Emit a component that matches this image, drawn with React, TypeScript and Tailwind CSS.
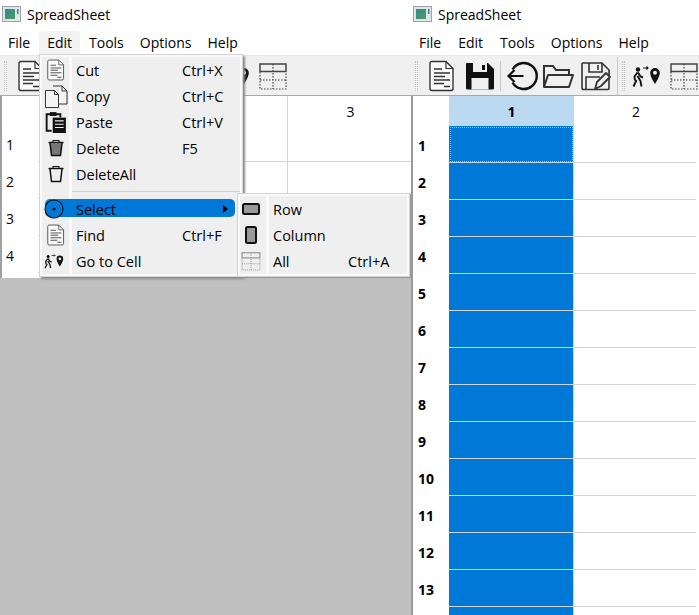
import type { ReactNode } from 'react';

const FONT = "font-['Open_Sans','Noto_Sans',sans-serif]";
const MENUS = ['File', 'Edit', 'Tools', 'Options', 'Help'];
const ROW_NUMS = [1, 2, 3, 4, 5, 6, 7, 8, 9, 10, 11, 12, 13];

function Svg({ size = 32, box = 32, className = '', children }: { size?: number; box?: number; className?: string; children: ReactNode }) {
  return (
    <svg width={size} height={size} viewBox={`0 0 ${box} ${box}`} fill="none" className={`shrink-0 ${className}`}>
      {children}
    </svg>
  );
}

function AppIcon() {
  return (
    <svg width="20" height="16" viewBox="0 0 20 16" className="shrink-0">
      <defs>
        <linearGradient id="ai" x1="0" y1="0" x2="1" y2="1">
          <stop offset="0" stopColor="#2f8a8a" />
          <stop offset="1" stopColor="#4f9a66" />
        </linearGradient>
      </defs>
      <rect x="0.5" y="0.5" width="18" height="15" fill="#dfe6ea" stroke="#9aa3aa" />
      <rect x="3" y="3" width="10" height="10" fill="url(#ai)" />
      <rect x="15" y="3" width="1.5" height="5" fill="#50707a" />
    </svg>
  );
}

function DocIcon({ size = 32, color = '#333' }: { size?: number; color?: string }) {
  return (
    <Svg size={size}>
      <path d="M6 1.5h14l7 7v20a2 2 0 0 1-2 2H6a2 2 0 0 1-2-2v-25a2 2 0 0 1 2-2z" fill="#fafafa" stroke={color} strokeWidth="1.4" />
      <path d="M20 1.5v7h7" stroke={color} strokeWidth="1.2" />
      <path d="M8 9h8M8 13h16M8 16.5h11M8 20h16M8 23.5h10M18 26.5h6" stroke={color} strokeWidth="1.5" />
    </Svg>
  );
}

function SaveIcon() {
  return (
    <Svg>
      <path d="M3 3h21l6 6v19a1.5 1.5 0 0 1-1.5 1.5h-25A1.5 1.5 0 0 1 2 28V4a1 1 0 0 1 1-1z" fill="#111" />
      <rect x="9" y="3" width="14" height="9" fill="#f0f0f0" />
      <rect x="18" y="5" width="3" height="5" fill="#111" />
      <rect x="7.5" y="18" width="17" height="11.5" fill="#f0f0f0" />
    </Svg>
  );
}

function BackIcon() {
  return (
    <Svg>
      <path d="M6.5 9.5A13 13 0 1 1 6.5 22.5" stroke="#111" strokeWidth="2.4" />
      <path d="M2.5 16h15M8.5 10l-6 6 6 6" stroke="#111" strokeWidth="2.2" />
    </Svg>
  );
}

function FolderIcon() {
  return (
    <Svg>
      <path d="M2 27V6h9l3 4h13v5" stroke="#333" strokeWidth="2" />
      <path d="M2 27l4-12h25l-4 12z" stroke="#333" strokeWidth="2" strokeLinejoin="round" />
    </Svg>
  );
}

function SaveAsIcon() {
  return (
    <Svg>
      <path d="M3 3h19l7 7v18a1.5 1.5 0 0 1-1.5 1.5h-24A1.5 1.5 0 0 1 2 28V4a1 1 0 0 1 1-1z" fill="#f0f0f0" stroke="#333" strokeWidth="1.6" />
      <path d="M9 3v9h13V3M18 5v5M6 29V17h14" stroke="#333" strokeWidth="1.6" />
      <path d="M15 29l2-7 9-9 4 4-9 9z" fill="#f0f0f0" stroke="#333" strokeWidth="1.8" strokeLinejoin="round" />
    </Svg>
  );
}

function GotoIcon({ size = 32 }: { size?: number }) {
  return (
    <Svg size={size}>
      <circle cx="9" cy="9.5" r="2.2" fill="#111" />
      <path d="M8.5 12.5l-3 4 .5 4M9 12.5l2.5 4 2.500 1M8.500 16l3 5 1 5.500M7.500 20l-3 6.500" stroke="#111" strokeWidth="1.900" />
      <path d="M14 8h5M17.500 6.500L19 8l-1.500 1.500" stroke="#111" strokeWidth="1.100" />
      <path d="M26 8a4.800 4.800 0 0 1 4.800 4.800C30.800 17 26 24 26 24s-4.800-7-4.800-11.200A4.800 4.800 0 0 1 26 8z" fill="#111" />
      <circle cx="26" cy="12.800" r="2" fill="#f0f0f0" />
    </Svg>
  );
}

function AllIcon({ size = 32, color = '#444' }: { size?: number; color?: string }) {
  return (
    <Svg size={size}>
      <rect x="3" y="4" width="26" height="7.500" fill="#eee" stroke={color} strokeWidth="1.500" />
      <path d="M3 12v17h26V12M3 20h26M16 4v25" stroke={color} strokeWidth="1.200" strokeDasharray="1.500 1.500" />
    </Svg>
  );
}

function CopyIcon() {
  return (
    <Svg size={24} box={24}>
      <path d="M9 2h9l5 5v13H15" fill="#f4f4f4" stroke="#333" />
      <path d="M18 2v5h5" stroke="#333" />
      <path d="M1.500 6.500h9l4 4v13h-13z" fill="#f4f4f4" stroke="#333" />
      <path d="M10.500 6.500v4h4" stroke="#333" />
    </Svg>
  );
}

function PasteIcon() {
  return (
    <Svg size={22} box={20}>
      <path d="M6 18H1.500V3H14v3" stroke="#111" strokeWidth="1.700" />
      <rect x="4.500" y="1" width="6" height="3.500" fill="#111" />
      <rect x="7" y="6" width="12" height="14" fill="#111" />
      <path d="M9 9h8M9 12h8M9 15h8" stroke="#eee" strokeWidth="1" />
    </Svg>
  );
}

function TrashIcon({ filled }: { filled?: boolean }) {
  return (
    <Svg size={18} box={18}>
      <path d="M1.500 3.500h15" stroke="#111" strokeWidth="1.500" />
      <path d="M6 3V1.500h6V3" stroke="#111" strokeWidth="1.100" />
      <path d="M3 4l1.500 12.500h9L15 4" fill={filled ? '#777' : 'none'} stroke="#111" strokeWidth="1.500" />
    </Svg>
  );
}

function RadioIcon() {
  return (
    <svg width="20" height="20" viewBox="0 0 20 20" className="-ml-[3px] shrink-0">
      <circle cx="10" cy="10" r="9" fill="#0078d7" stroke="#111" strokeWidth="1.100" />
      <circle cx="10" cy="10" r="1.500" fill="#111" />
    </svg>
  );
}

function RowIcon() {
  return (
    <svg width="18" height="12" viewBox="0 0 18 12" className="shrink-0">
      <rect x="1" y="1" width="16" height="10" rx="1.500" fill="#999" stroke="#111" strokeWidth="2" />
    </svg>
  );
}

function ColumnIcon() {
  return (
    <svg width="12" height="18" viewBox="0 0 12 18" className="shrink-0">
      <rect x="1" y="1" width="10" height="16" rx="1.500" fill="#999" stroke="#111" strokeWidth="2" />
    </svg>
  );
}

function Grip() {
  return <div className="h-[30px] w-[3px] shrink-0 border-x border-dotted border-[#c4c4c4]" />;
}

function TitleBar() {
  return (
    <div className="flex h-[30px] items-center gap-[5px] pb-[2px] pl-[2px] text-[14px] text-black">
      <AppIcon />
      <span>SpreadSheet</span>
    </div>
  );
}

function MenuBar({ active }: { active?: string }) {
  return (
    <div className="flex h-[25px] items-center text-[14px] text-black">
      {MENUS.map((m, i) => (
        <span key={m} className={`flex h-[24px] items-center rounded-t-sm px-[8px] ${i === 1 || i === 2 ? 'ml-[1px]' : ''} ${m === active ? 'bg-[#f3f3f3]' : ''}`}>
          {m}
        </span>
      ))}
    </div>
  );
}

function MenuRow({ icon, label, shortcut, arrow, selected, gutter = 'w-[27px]' }: { icon?: ReactNode; label: string; shortcut?: string; arrow?: boolean; selected?: boolean; gutter?: string }) {
  return (
    <div className="relative flex h-[26px] items-center">
      {selected && <div className="absolute left-[3px] right-[5px] top-[3px] h-[18px] rounded-[5px] bg-[#0078d7]" />}
      <div className={`relative z-10 flex h-full ${gutter} shrink-0 items-center justify-center`}>{icon}</div>
      <span className="relative z-10 ml-[7px] flex-1 pt-[2px] text-[14.5px] text-black">{label}</span>
      {shortcut && <span className="relative z-10 w-[58px] pt-[2px] text-[14.5px] text-black">{shortcut}</span>}
      {arrow && <span className="relative z-10 mr-[12px] h-0 w-0 border-y-[4px] border-l-[5px] border-y-transparent border-l-black" />}
    </div>
  );
}

function SubMenu() {
  const gutter = 'w-[26px] pr-[4px]';
  return (
    <div className="absolute left-[197px] top-[138px] z-20 w-[173px] border border-[#d4d4d4] bg-[#fafafa] p-[2px] shadow-[1px_1px_1px_#9a9a9a]">
      <div className="relative bg-[#efefef] pr-[1px]">
        <div className="absolute inset-y-0 left-[26px] w-[3px] bg-[#fafafa]" />
        <MenuRow icon={<RowIcon />} label="Row" gutter={gutter} />
        <MenuRow icon={<ColumnIcon />} label="Column" gutter={gutter} />
        <MenuRow icon={<AllIcon size={22} color="#888" />} label="All" shortcut="Ctrl+A" gutter={gutter} />
      </div>
    </div>
  );
}

function EditMenu() {
  return (
    <div className="absolute left-[39px] top-[54px] z-10 w-[204px] border border-[#d4d4d4] bg-[#fafafa] p-[2px] shadow-[2px_2px_2px_#8a8a8a]">
      <div className="relative bg-[#efefef]">
        <div className="absolute inset-y-0 left-[27px] w-[3px] bg-[#fafafa]" />
        <MenuRow icon={<DocIcon size={22} color="#555" />} label="Cut" shortcut="Ctrl+X" />
        <MenuRow icon={<CopyIcon />} label="Copy" shortcut="Ctrl+C" />
        <MenuRow icon={<PasteIcon />} label="Paste" shortcut="Ctrl+V" />
        <MenuRow icon={<TrashIcon filled />} label="Delete" shortcut="F5" />
        <MenuRow icon={<TrashIcon />} label="DeleteAll" />
        <div className="flex h-[9px] items-center">
          <div className="ml-[30px] h-px flex-1 bg-[#d0d0d0]" />
        </div>
        <MenuRow icon={<RadioIcon />} label="Select" arrow selected />
        <MenuRow icon={<DocIcon size={22} color="#555" />} label="Find" shortcut="Ctrl+F" />
        <MenuRow icon={<div className="-ml-[5px]"><GotoIcon size={22} /></div>} label="Go to Cell" />
      </div>
      <SubMenu />
    </div>
  );
}

function LeftWindow() {
  return (
    <div className="relative flex h-full w-[411px] shrink-0 flex-col">
      <TitleBar />
      <MenuBar active="Edit" />
      <div className="flex h-[41px] items-center border-y border-[#e8e8e8] border-b-[#a8a8a8] bg-[#f0f0f0] pl-[4px]">
        <Grip />
        <div className="ml-[8px]">
          <DocIcon />
        </div>
        <div className="ml-[171px]">
          <GotoIcon />
        </div>
        <div className="ml-[7px]">
          <AllIcon />
        </div>
      </div>
      <div className="grid h-[182px] grid-cols-[36px_250px_123px] grid-rows-[30px_36px_37px_37px_37px] border-l-2 border-[#a0a0a0] text-[14px] text-black">
        <div />
        <div className="border-r border-[#d4d4d4]" />
        <div className="flex items-center justify-center pl-[2px]">3</div>
        {[1, 2, 3, 4].map((n) => (
          <div key={n} className="contents">
            <div className="flex items-center pl-[4px] pt-[1px]">{n}</div>
            <div className="border-b border-r border-[#d4d4d4]" />
            <div className="border-b border-[#d4d4d4]" />
          </div>
        ))}
      </div>
      <div className="flex-1 bg-[#c0c0c0]" />
      <EditMenu />
    </div>
  );
}

function RightWindow() {
  return (
    <div className="flex h-full flex-1 flex-col">
      <TitleBar />
      <MenuBar />
      <div className="flex h-[41px] items-center border-y border-[#e8e8e8] border-b-[#a8a8a8] bg-[#f0f0f0] pl-[4px]">
        <Grip />
        <div className="ml-[8px]">
          <DocIcon />
        </div>
        <div className="ml-[6px]">
          <SaveIcon />
        </div>
        <div className="ml-[4px] h-[30px] w-px bg-[#c8c8c8]" />
        <div className="ml-[5px]">
          <BackIcon />
        </div>
        <div className="ml-[4px]">
          <FolderIcon />
        </div>
        <div className="ml-[6px]">
          <SaveAsIcon />
        </div>
        <div className="ml-[5px] h-[38px] w-px bg-[#c8c8c8]" />
        <div className="ml-[4px]">
          <Grip />
        </div>
        <div className="ml-[4px]">
          <GotoIcon />
        </div>
        <div className="ml-[7px]">
          <AllIcon />
        </div>
      </div>
      <div className="flex-1 overflow-hidden border-l-2 border-[#9a9a9a] text-[14px] text-black">
        <div className="grid w-[283px] grid-cols-[36px_125px_122px] grid-rows-[30px]">
          <div />
          <div className="flex items-center justify-center bg-[#bbdaf2] font-bold">1</div>
          <div className="flex items-center justify-center pl-[2px]">2</div>
          {ROW_NUMS.map((n, i) => (
            <div key={n} className="contents">
              <div className="flex h-[37px] items-center pl-[5px] pt-[2px] font-bold">{n}</div>
              <div className={`h-[37px] border-b border-r border-[#d4d4d4] bg-[#0078d7] ${i === 0 ? 'outline-1 -outline-offset-2 outline-dotted outline-[#f0a860]' : ''}`} />
              <div className="h-[37px] border-b border-[#d4d4d4]" />
            </div>
          ))}
          <div />
          <div className="h-[10px] border-r border-[#d4d4d4] bg-[#0078d7]" />
        </div>
      </div>
    </div>
  );
}

export default function App() {
  return (
    <div className={`flex h-[615px] w-[699px] overflow-hidden bg-white ${FONT}`}>
      <LeftWindow />
      <RightWindow />
    </div>
  );
}
